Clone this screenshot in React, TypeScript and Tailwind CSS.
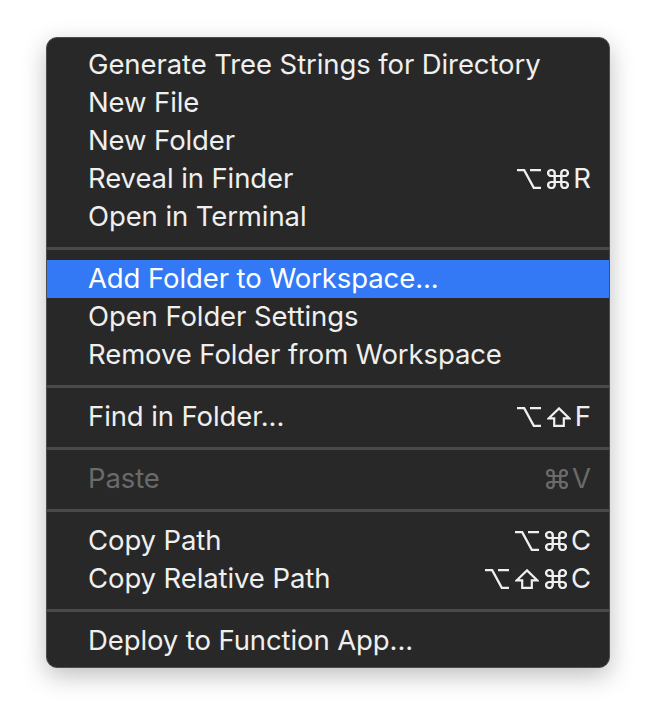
import React from "react";

type Key = "opt" | "cmd" | "shift" | string;

type Item =
  | { kind: "item"; label: string; keys?: Key[]; active?: boolean; disabled?: boolean }
  | { kind: "sep" };

const items: Item[] = [
  { kind: "item", label: "Generate Tree Strings for Directory" },
  { kind: "item", label: "New File" },
  { kind: "item", label: "New Folder" },
  { kind: "item", label: "Reveal in Finder", keys: ["opt", "cmd", "R"] },
  { kind: "item", label: "Open in Terminal" },
  { kind: "sep" },
  { kind: "item", label: "Add Folder to Workspace...", active: true },
  { kind: "item", label: "Open Folder Settings" },
  { kind: "item", label: "Remove Folder from Workspace" },
  { kind: "sep" },
  { kind: "item", label: "Find in Folder...", keys: ["opt", "shift", "F"] },
  { kind: "sep" },
  { kind: "item", label: "Paste", keys: ["cmd", "V"], disabled: true },
  { kind: "sep" },
  { kind: "item", label: "Copy Path", keys: ["opt", "cmd", "C"] },
  { kind: "item", label: "Copy Relative Path", keys: ["opt", "shift", "cmd", "C"] },
  { kind: "sep" },
  { kind: "item", label: "Deploy to Function App..." },
];

const font = { fontFamily: "Inter, 'DejaVu Sans', sans-serif" };

function KeyGlyph({ k }: { k: Key }) {
  if (k === "opt") {
    return (
      <svg width="24" height="20" viewBox="0 0 24 20" fill="none" stroke="currentColor" strokeWidth="2.3">
        <path d="M0 1.2H7.2L16.8 18.8H24M13 1.2H24" />
      </svg>
    );
  }
  if (k === "cmd") {
    return (
      <svg width="22" height="20" viewBox="2 2 20 20" preserveAspectRatio="none" fill="none" stroke="currentColor" strokeWidth="2.2">
        <path d="M15 6v12a3 3 0 1 0 3-3H6a3 3 0 1 0 3 3V6a3 3 0 1 0-3 3h12a3 3 0 1 0-3-3" />
      </svg>
    );
  }
  if (k === "shift") {
    return (
      <svg width="24" height="20" viewBox="0 0 24 20" fill="none" stroke="currentColor" strokeWidth="2.2" strokeLinejoin="miter">
        <path d="M12 1.4L22.4 11.4H16.8V18.9H7.2V11.4H1.6Z" />
      </svg>
    );
  }
  return <span className="ml-[-2px]">{k}</span>;
}

export default function App() {
  return (
    <div className="w-[656px] h-[722px] bg-white pt-[37px]" style={font}>
      <div className="mx-auto w-[564px] rounded-[11px] border border-[#4d4d4d] bg-[#282828] pt-[8px] pb-[7px] shadow-[0_8px_24px_rgba(0,0,0,0.25)]">
        {items.map((it, i) => {
          if (it.kind === "sep") {
            return (
              <div key={i} className="pt-[11px] pb-[10px]">
                <div className="h-[3px] bg-[#4a4a4a]" />
              </div>
            );
          }
          const color = it.disabled ? "text-[#6a6a6a]" : "text-[#efefef]";
          return (
            <div
              key={i}
              className={`flex h-[38px] items-center justify-between pl-[41px] pr-[18px] text-[27.5px] ${color} ${
                it.active ? "bg-[#3379f5] text-white" : ""
              }`}
            >
              <span className="tracking-[-0.1px]">{it.label}</span>
              {it.keys && (
                <span className="flex items-center gap-[6px]">
                  {it.keys.map((k, j) => (
                    <KeyGlyph key={j} k={k} />
                  ))}
                </span>
              )}
            </div>
          );
        })}
      </div>
    </div>
  );
}
